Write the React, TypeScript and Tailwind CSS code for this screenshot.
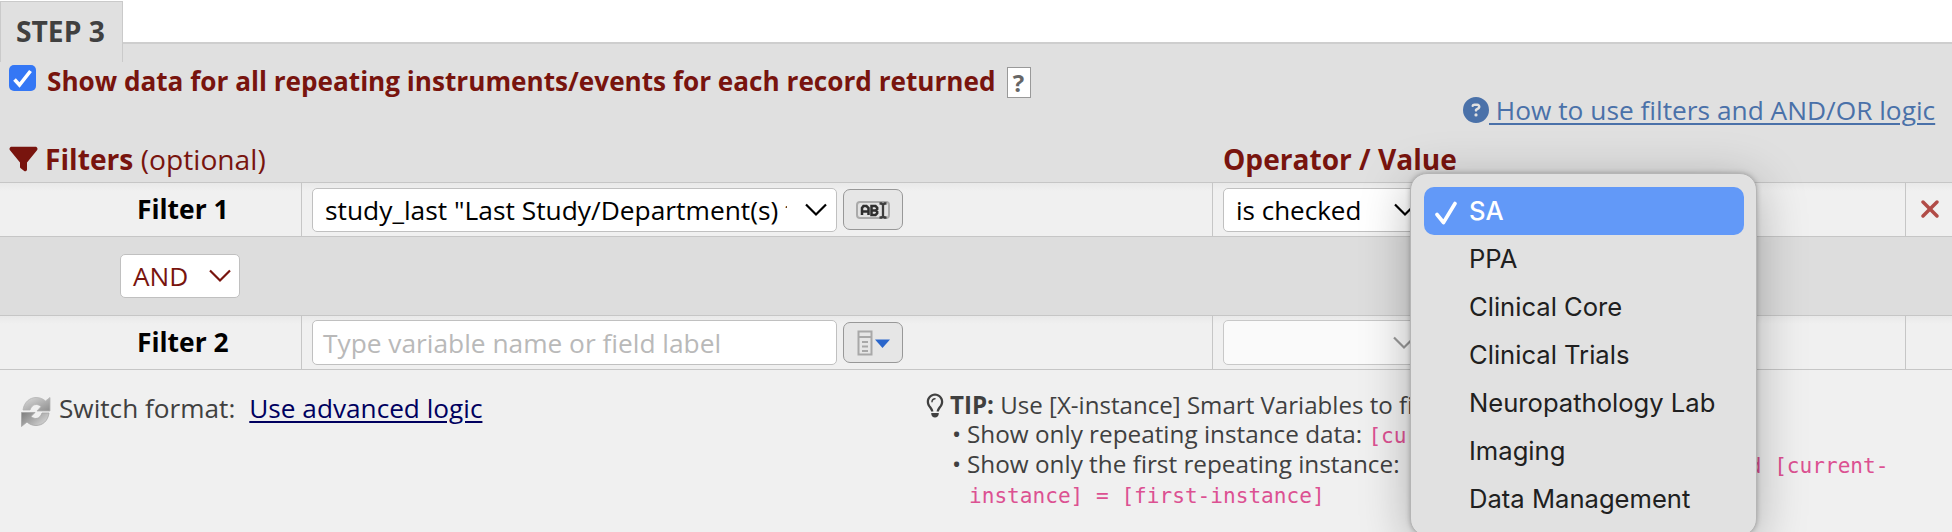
import type { ReactNode } from "react";
import { FaCircleQuestion, FaFilter, FaRegLightbulb, FaXmark } from "react-icons/fa6";

const options = ["SA", "PPA", "Clinical Core", "Clinical Trials", "Neuropathology Lab", "Imaging", "Data Management"];

function Chevron({ className }: { className: string }) {
  return (
    <svg className={`h-[14px] w-[22px] shrink-0 ${className}`} viewBox="0 0 22 14" fill="none" stroke="currentColor" strokeWidth="2.2">
      <path d="M1 1.5 11 11.5 21 1.5" />
    </svg>
  );
}

function Code({ children }: { children: ReactNode }) {
  return <code className="font-['DejaVu_Sans_Mono',monospace] text-[21.1px] leading-none text-[#dc5192]">{children}</code>;
}

function RenameIcon() {
  return (
    <svg className="h-[20px] w-[34px]" viewBox="0 0 34 20" fill="none">
      <rect x="1" y="2" width="32" height="16" rx="3" fill="#e2e2e2" stroke="#aaa" strokeWidth="2" />
      <path d="M6 15V8l1.500-2h3l2 2v7M6 11.500h6.500M15.500 6v9h4l1.700-1.700v-1.500l-1.500-1.300 1.500-1.300V7.700L19.500 6zM15.500 10.500h4" stroke="#2e2e2e" strokeWidth="2.500" />
      <path d="M23.500 3.500h2l1.500 1.500 1.500-1.500h2M27 5v11M23.500 17.500h2l1.500-1.500 1.500 1.500h2" stroke="#3d3d3d" strokeWidth="2.300" />
    </svg>
  );
}

function ListIcon() {
  return (
    <svg className="h-[26px] w-[34px]" viewBox="0 0 34 26" fill="none">
      <path d="M2.500 1.500h13v23h-13zM2.500 7h13M6 12h6M6 16.500h6M6 21h6" stroke="#a8a8a8" strokeWidth="2" />
      <path d="M19 9.500h15l-7.500 8.500z" fill="#2a66cb" />
    </svg>
  );
}

function RefreshIcon() {
  return (
    <svg className="h-[32px] w-[32px]" viewBox="0 0 32 32">
      <defs>
        <linearGradient id="top" x1="0" y1="0" x2="1" y2="1">
          <stop offset="0" stopColor="#dcdcdc" />
          <stop offset="1" stopColor="#8d8d8d" />
        </linearGradient>
        <linearGradient id="bottom" x1="0" y1="0" x2="1" y2="0.600">
          <stop offset="0" stopColor="#7c7c7c" />
          <stop offset="1" stopColor="#d4d4d4" />
        </linearGradient>
      </defs>
      <path d="M3 14C4 6 10 1.500 16 1.500c4 0 7 1.300 9.500 3.500L30 1.500V15H17l4-4.500C17 7 12 8 10 14z" fill="url(#top)" stroke="#b4b4b4" strokeWidth=".8" />
      <path d="M29 17c-1 8-6.500 12.500-13 12.500-4 0-6.500-1.300-9-3.500L1.500 30.500V16.500H15L11 20.500C15 24 20 23 22 17z" fill="url(#bottom)" stroke="#a4a4a4" strokeWidth=".8" />
    </svg>
  );
}

function IconButton({ children }: { children: ReactNode }) {
  return (
    <button className="ml-[6px] flex h-[41px] w-[60px] items-center justify-center rounded-[7px] border border-[#989898] bg-[#e6e6e6]">
      {children}
    </button>
  );
}

function FilterRow({ label, field, operator, end }: { label: string; field: ReactNode; operator: ReactNode; end?: ReactNode }) {
  return (
    <div className="flex h-[54px] border-b border-[#c6c6c6] bg-gradient-to-b from-[#e9e9e9] from-0% to-[#f0f0f0] to-15%">
      <div className="w-[301px] shrink-0 pl-[137px] pt-px text-[26.4px] font-bold leading-[50px] text-black">{label}</div>
      <div className="flex w-[911px] shrink-0 items-center border-l border-[#c6c6c6] pl-[10px]">{field}</div>
      <div className="flex w-[693px] shrink-0 items-center border-l border-[#c6c6c6] pl-[10px]">{operator}</div>
      <div className="flex grow border-l border-[#c6c6c6] pl-[10px] pt-[12px]">{end}</div>
    </div>
  );
}

export default function App() {
  return (
    <div className="relative h-[532px] w-[1952px] overflow-hidden whitespace-nowrap bg-white font-['Open_Sans','Noto_Sans',sans-serif] text-[26.2px] text-[#404040]">
      <header className="flex h-[62px] items-end">
        <div className="h-[61px] w-[123px] shrink-0 border border-b-0 border-[#cacaca] bg-[#e0e0e0] pl-[15px] text-[28.2px] font-bold leading-[59px]">STEP 3</div>
        <div className="h-[20px] grow border-t-2 border-[#cecece] bg-[#e0e0e0]" />
      </header>

      <section className="flex h-[121px] justify-between border-b border-[#c6c6c6] bg-[#e0e0e0] text-[#78140e]">
        <div className="w-[1223px] shrink-0 pl-[9px]">
          <div className="flex h-[40px] items-start">
            <svg className="mt-[3px] h-[26px] w-[27px] shrink-0" viewBox="0 0 27 26">
              <rect width="27" height="26" rx="5" fill="#3477f5" />
              <path d="m5.500 14.500 5 5.500L21.500 6" fill="none" stroke="#fff" strokeWidth="3.600" />
            </svg>
            <span className="ml-[11px] text-[26.15px] font-bold leading-[38px]">Show data for all repeating instruments/events for each record returned</span>
            <span className="ml-[11px] mt-[5px] h-[31px] w-[24px] shrink-0 border border-[#999] bg-white text-center text-[24px] font-bold leading-[29px] text-[#666]">?</span>
          </div>
          <div className="mt-[39px] flex h-[40px] items-start text-[28.2px]">
            <FaFilter className="mt-[4px] h-[28px] w-[29px]" />
            <span className="ml-[7px] leading-[36px]"><b>Filters</b> (optional)</span>
          </div>
        </div>
        <div className="grow">
          <a className="mt-[29px] flex items-center pl-[240px] text-[26.3px] leading-[38px] text-[#4a71a9]">
            <FaCircleQuestion className="h-[26px] w-[26px]" />
            <span className="whitespace-pre underline decoration-2 underline-offset-[3px]"> How to use filters and AND/OR logic</span>
          </a>
          <div className="mt-[12px] text-[28.1px] font-bold leading-[36px]">Operator / Value</div>
        </div>
      </section>

      <FilterRow
        label="Filter 1"
        field={
          <>
            <div className="flex h-[44px] w-[525px] items-center rounded-[5px] border border-[#c0c0c0] bg-white pl-[12px] text-black">
              <span className="w-[462px] overflow-hidden text-[26.35px] leading-[40px]">study_last "Last Study/Department(s) that</span>
              <Chevron className="ml-[18px]" />
            </div>
            <IconButton><RenameIcon /></IconButton>
          </>
        }
        operator={
          <div className="flex h-[44px] w-[205px] items-center rounded-[5px] border border-[#c0c0c0] bg-white pl-[12px] text-black">
            <span className="w-[158px] text-[26px] leading-[40px]">is checked</span>
            <Chevron className="" />
          </div>
        }
        end={<FaXmark className="h-[28px] w-[28px] text-[#b14c47]" />}
      />
      <div className="flex h-[79px] border-b border-[#c6c6c6] bg-[#dddddd] pl-[120px] pt-[17px]">
        <div className="flex h-[44px] w-[120px] items-center rounded-[5px] border border-[#c0c0c0] bg-white pl-[12px] text-[#78140e]">
          <span className="w-[76px] leading-[40px]">AND</span>
          <Chevron className="" />
        </div>
      </div>
      <FilterRow
        label="Filter 2"
        field={
          <>
            <div className="flex h-[45px] w-[525px] items-center rounded-[5px] border border-[#c0c0c0] bg-white pl-[10px] text-[#b9b9b9]">
              <span className="text-[26.3px] leading-[40px]">Type variable name or field label</span>
            </div>
            <IconButton><ListIcon /></IconButton>
          </>
        }
        operator={
          <div className="flex h-[45px] w-[205px] items-center rounded-[5px] border border-[#c8c8c8] bg-[#fafafa] pl-[169px] text-[#999]">
            <Chevron className="" />
          </div>
        }
      />

      <footer className="flex h-[162px] bg-[#f0f0f0]">
        <div className="flex w-[926px] shrink-0 items-start pl-[20px] pt-[20px] leading-[36px]">
          <span className="mt-[6px]"><RefreshIcon /></span>
          <span className="ml-[7px]">Switch format:</span>
          <a className="ml-[14px] text-[#00005f] underline decoration-2 underline-offset-[3px]">Use advanced logic</a>
        </div>
        <div className="pt-[20px] text-[24.3px] leading-[30px]">
          <div className="flex h-[29px]">
            <FaRegLightbulb className="mt-[3px] h-[25px] w-[18px]" />
            <span className="ml-[6px] text-[24.1px]"><b>TIP:</b> Use [X-instance] Smart Variables to filter</span>
          </div>
          <div className="flex h-[30px] pl-[26px]"><span className="w-[15px]">•</span><span>Show only repeating instance data: <Code>[current-instance]</Code></span></div>
          <div className="flex h-[30px] pl-[26px]"><span className="w-[15px]">•</span><span>Show only the first repeating instance: <Code>[current-instance] &lt;&gt; "" and [current-</Code></span></div>
          <div className="h-[30px] pl-[43px]"><Code>instance] = [first-instance]</Code></div>
        </div>
      </footer>

      <div className="absolute left-[1410px] top-[173px] h-[363px] w-[347px] rounded-[17px] border border-[#b5b5b5] bg-[#e1e1e1] pl-[13px] pr-[12px] pt-[13px] font-['Inter',sans-serif] text-[25.6px] text-[#202020] shadow-[0_10px_50px_rgba(0,0,0,0.28),0_0_5px_rgba(0,0,0,0.25)]">
        {options.map((name, i) => (
          <div key={name} className={i === 0 ? "flex h-[48px] items-center rounded-[10px] bg-[#6299f8] pl-[11px] font-medium text-white" : "flex h-[48px] items-center pl-[11px]"}>
            <span className="w-[34px]">
              {i === 0 && (
                <svg className="mt-[4px] h-[24px] w-[22px]" viewBox="0 0 22 24" fill="none" stroke="#fff" strokeWidth="3.600" strokeLinecap="round" strokeLinejoin="round">
                  <path d="m2 13.500 6.500 8L20 2.500" />
                </svg>
              )}
            </span>
            <span>{name}</span>
          </div>
        ))}
      </div>
    </div>
  );
}
